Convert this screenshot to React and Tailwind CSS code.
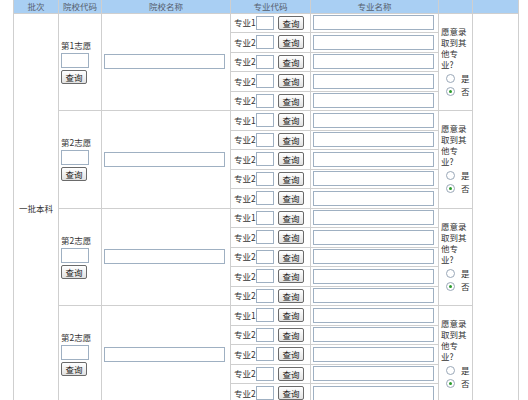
import React from "react";

const groups = ["第1志愿", "第2志愿", "第2志愿", "第2志愿"];
const subs = ["专业1", "专业2", "专业2", "专业2", "专业2"];

const cell = "border border-[#cfcfcf] p-0 align-middle";
const box = "border border-[#9fb0c2] bg-white";

// Old-style grey button
const QueryButton = ({ className = "" }) => (
  <button
    type="button"
    className={`h-[14px] w-[26px] rounded-[2px] border border-[#6a6a6a] bg-gradient-to-b from-white to-[#e2e2e2] text-[8.5px] leading-none text-[#222] ${className}`}
  >
    查询
  </button>
);

const Radio = ({ checked, label }) => (
  <div className="flex items-center gap-[6px] pl-[5px] h-[13px]">
    <span className="flex h-[9px] w-[9px] items-center justify-center rounded-full border border-[#9aa8b8] bg-white">
      {checked && <span className="h-[3px] w-[3px] rounded-full bg-[#2b9b2b]" />}
    </span>
    <span>{label}</span>
  </div>
);

export default function App() {
  return (
    <div
      className="h-[400px] w-[528px] overflow-hidden bg-white text-[8.5px] text-[#333]"
      style={{ fontFamily: '"Noto Sans CJK SC", "DejaVu Sans", sans-serif' }}
    >
      <table className="ml-[13px] w-[505px] table-fixed border-collapse">
        <colgroup>
          <col className="w-[45px]" />
          <col className="w-[43px]" />
          <col className="w-[129px]" />
          <col className="w-[80px]" />
          <col className="w-[128px]" />
          <col className="w-[34px]" />
          <col className="w-[46px]" />
        </colgroup>
        <thead>
          <tr className="h-[13px] bg-[#a9cff3] text-[#56606e]">
            <th className="border-x border-[#cfcfcf] p-0 font-normal leading-none">批次</th>
            <th className="border-x border-[#cfcfcf] p-0 font-normal leading-none">院校代码</th>
            <th className="border-x border-[#cfcfcf] p-0 font-normal leading-none">院校名称</th>
            <th className="border-x border-[#cfcfcf] p-0 font-normal leading-none">专业代码</th>
            <th className="border-x border-[#cfcfcf] p-0 font-normal leading-none">专业名称</th>
            <th className="border-x border-[#cfcfcf] p-0 font-normal leading-none"></th>
            <th className="border-x border-[#cfcfcf] p-0 font-normal leading-none"></th>
          </tr>
        </thead>
        <tbody>
          {groups.map((g, gi) =>
            subs.map((s, si) => (
              <tr key={`${gi}-${si}`} className="h-[19.5px]">
                {gi === 0 && si === 0 && (
                  <td rowSpan={20} className={`${cell} text-center`}>
                    一批本科
                  </td>
                )}
                {si === 0 && (
                  <td rowSpan={5} className={`${cell} pl-[2px]`}>
                    <div className="leading-[11px]">{g}</div>
                    <input className={`mt-[2px] block h-[15px] w-[28px] ${box}`} />
                    <QueryButton className="mt-[2px] block" />
                  </td>
                )}
                {si === 0 && (
                  <td rowSpan={5} className={`${cell} px-[2px]`}>
                    <input className={`block h-[15px] w-[121px] ${box}`} />
                  </td>
                )}
                <td className={cell}>
                  <div className="flex items-center pl-[3px]">
                    <span className="w-[22px]">{s}</span>
                    <input className={`h-[14px] w-[18px] ${box}`} />
                    <QueryButton className="ml-[4px]" />
                  </div>
                </td>
                <td className={`${cell} px-[2px]`}>
                  <input className={`block h-[15px] w-[121px] ${box}`} />
                </td>
                {si === 0 && (
                  <td rowSpan={5} className={`${cell} pl-[2px]`}>
                    <div className="leading-[11px]">
                      愿意录<br />取到其<br />他专<br />业?
                    </div>
                    <div className="mt-[2px]">
                      <Radio label="是" />
                      <Radio checked label="否" />
                    </div>
                  </td>
                )}
                {gi === 0 && si === 0 && <td rowSpan={20} className={cell}></td>}
              </tr>
            ))
          )}
        </tbody>
      </table>
    </div>
  );
}
